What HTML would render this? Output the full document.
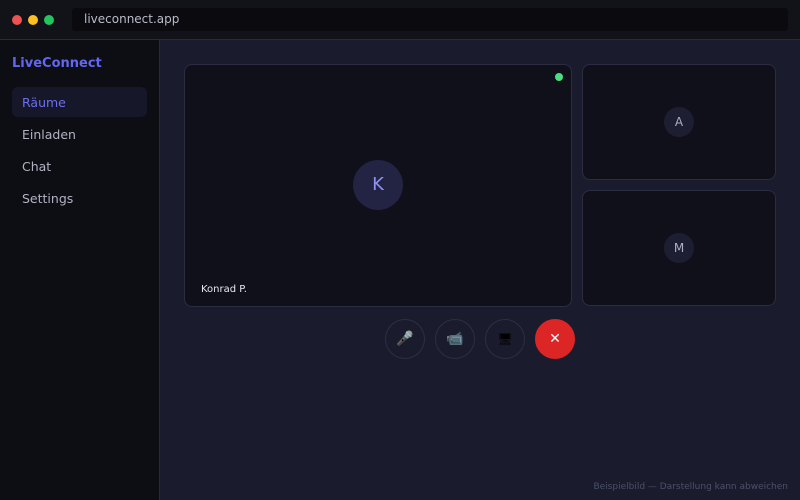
<!DOCTYPE html>
<html><head><meta charset="utf-8"><style>
*{box-sizing:border-box;margin:0;padding:0}
body{width:800px;height:500px;overflow:hidden;background:#1b1b2e;font-family:"DejaVu Sans","Liberation Sans",sans-serif;position:relative}
.top{position:absolute;left:0;top:0;width:800px;height:40px;background:#121219;border-bottom:1px solid #2a2a3c}
.dot{position:absolute;top:15px;width:10px;height:10px;border-radius:50%}
.url{position:absolute;left:72px;top:8px;width:716px;height:23px;background:#0a0a0f;border-radius:3px;color:#b8bccb;font-size:12px;line-height:23px;padding-left:12px}
.side{position:absolute;left:0;top:40px;width:160px;height:460px;background:#0d0d14;border-right:1px solid #2a2a3c}
.logo{position:absolute;left:12px;top:16px;color:#6366f1;font-weight:bold;font-size:13px}
.nav{position:absolute;left:12px;width:135px;height:30px;border-radius:6px;font-size:12.5px;color:#b0b4c2;line-height:30px;padding-left:10px}
.tile{position:absolute;background:#10101a;border:1px solid #2c2c42;border-radius:8px}
.av{position:absolute;border-radius:50%;background:#232343;color:#8d93f0;text-align:center}
.ctl{position:absolute;top:319px;width:40px;height:40px;border-radius:50%;border:1px solid #2e2e44;text-align:center;line-height:38px;font-size:14px}
</style></head><body>
<div class="top">
<div class="dot" style="left:12px;background:#ef5350"></div>
<div class="dot" style="left:28px;background:#fbbf24"></div>
<div class="dot" style="left:44px;background:#22c55e"></div>
<div class="url">liveconnect.app</div>
</div>
<div class="side">
<div class="logo">LiveConnect</div>
<div class="nav" style="top:47px;background:#17172a;color:#6a6ff0;line-height:32px">Räume</div>
<div class="nav" style="top:80px">Einladen</div>
<div class="nav" style="top:112px">Chat</div>
<div class="nav" style="top:144px">Settings</div>
</div>
<div class="tile" style="left:184px;top:64px;width:388px;height:243px">
<div style="position:absolute;right:8px;top:8px;width:8px;height:8px;border-radius:50%;background:#4ade80"></div>
<div class="av" style="left:168px;top:95px;width:50px;height:50px;line-height:50px;font-size:18px">K</div>
<div style="position:absolute;left:16px;top:219px;color:#e6e8ef;font-size:10px">Konrad P.</div>
</div>
<div class="tile" style="left:582px;top:64px;width:194px;height:116px">
<div class="av" style="left:81px;top:42px;width:30px;height:30px;line-height:30px;font-size:12px;color:#aab0c8;background:#1e1e32">A</div>
</div>
<div class="tile" style="left:582px;top:190px;width:194px;height:116px">
<div class="av" style="left:81px;top:42px;width:30px;height:30px;line-height:30px;font-size:12px;color:#aab0c8;background:#1e1e32">M</div>
</div>
<div class="ctl" style="left:385px">🎤</div>
<div class="ctl" style="left:435px">📹</div>
<div class="ctl" style="left:485px;font-size:12px;color:#000">🖥</div>
<div class="ctl" style="left:535px;background:#dc2626;border-color:#dc2626;color:#fff;font-weight:bold;font-size:14px">✕</div>
<div style="position:absolute;right:12px;top:482px;color:#4b5068;font-size:9px">Beispielbild — Darstellung kann abweichen</div>
</body></html>
